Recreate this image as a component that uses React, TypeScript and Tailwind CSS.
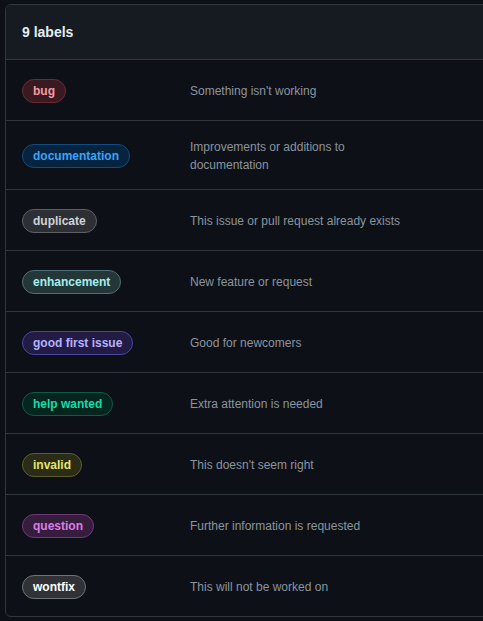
const labels = [
  {
    name: 'bug',
    description: "Something isn't working",
    pill: 'bg-[#3a1a21] border-[#6d2a34] text-[#f49ba4]',
  },
  {
    name: 'documentation',
    description: 'Improvements or additions to documentation',
    pill: 'bg-[#062440] border-[#124c7e] text-[#3da2f7]',
  },
  {
    name: 'duplicate',
    description: 'This issue or pull request already exists',
    pill: 'bg-[#2c2f34] border-[#5c6168] text-[#cfd3d7]',
  },
  {
    name: 'enhancement',
    description: 'New feature or request',
    pill: 'bg-[#233638] border-[#4e7073] text-[#a2eeef]',
  },
  {
    name: 'good first issue',
    description: 'Good for newcomers',
    pill: 'bg-[#221c44] border-[#4d449f] text-[#b8b0ff]',
  },
  {
    name: 'help wanted',
    description: 'Extra attention is needed',
    pill: 'bg-[#05261f] border-[#0b5c48] text-[#13dca9]',
  },
  {
    name: 'invalid',
    description: "This doesn't seem right",
    pill: 'bg-[#2b2c17] border-[#5d5e2d] text-[#e4e669]',
  },
  {
    name: 'question',
    description: 'Further information is requested',
    pill: 'bg-[#371d3d] border-[#6b3a73] text-[#d97ee4]',
  },
  {
    name: 'wontfix',
    description: 'This will not be worked on',
    pill: 'bg-[#303236] border-[#6e7176] text-white',
  },
];

export default function App() {
  return (
    <div
      className="w-[483px] h-[621px] overflow-hidden bg-[#0d1117] pt-[4px] pl-[5px]"
      style={{ fontFamily: '"Liberation Sans", Arial, sans-serif' }}
    >
      <div className="w-[520px] border border-[#30363d] rounded-md overflow-hidden">
        <div className="bg-[#161b22] px-4 py-4 border-b border-[#30363d]">
          <h2 className="text-sm leading-[22px] font-bold text-[#e6edf3]">9 labels</h2>
        </div>

        <div>
          {labels.map((label, i) => (
            <div
              key={label.name}
              className={`grid grid-cols-[168px_1fr] items-center px-4 pt-[17px] pb-[15px] min-h-[60px] ${
                i > 0 ? 'border-t border-[#30363d]' : ''
              }`}
            >
              <div className="flex items-center min-h-[28px]">
                <span
                  className={`inline-flex items-center h-6 px-[10px] rounded-full border text-xs font-bold ${label.pill}`}
                >
                  {label.name}
                </span>
              </div>
              <p className="max-w-[220px] text-xs leading-[18px] text-[#8b949e]">
                {label.description}
              </p>
            </div>
          ))}
        </div>
      </div>
    </div>
  );
}
